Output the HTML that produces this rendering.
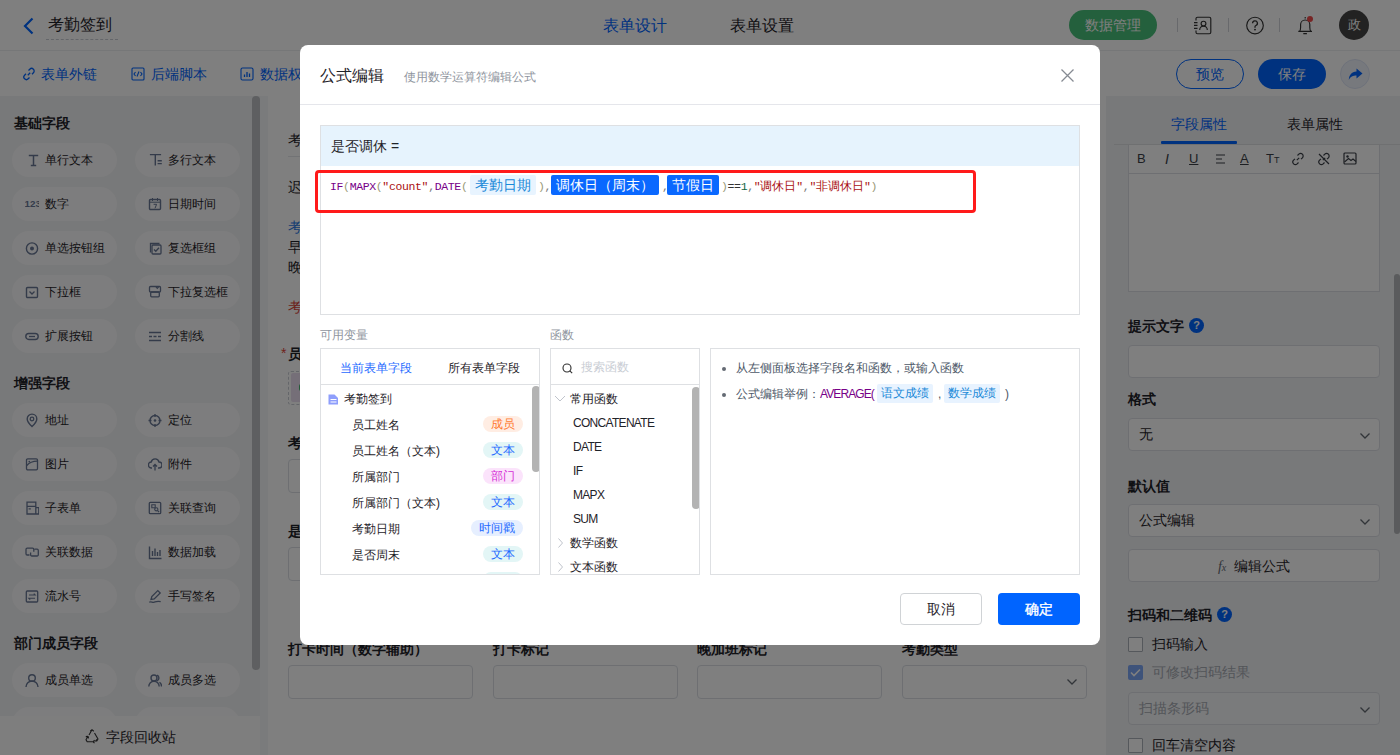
<!DOCTYPE html>
<html><head><meta charset="utf-8">
<style>
*{box-sizing:border-box;margin:0;padding:0}
html,body{width:1400px;height:755px;overflow:hidden;background:#fff;font-family:"Liberation Sans",sans-serif;color:#1f2329}
.a{position:absolute}
#hdr{left:0;top:0;width:1400px;height:51px;background:#fff;border-bottom:1px solid #eceef0}
#tb{left:0;top:51px;width:1400px;height:45px;background:#fff}
#lp{left:0;top:96px;width:268px;height:659px;background:#f1f2f4}
#lsb{left:260px;top:96px;width:8px;height:659px;background:#f5f6f8}
#thumb{left:252px;top:96px;width:8px;height:574px;border-radius:4px;background:#bcbec2}
#lfoot{left:0;top:716px;width:260px;height:39px;background:#fcfcfd;font-size:14px;color:#1f2329}
.sec{font-size:14px;font-weight:bold;color:#1f2329}
.pill{width:105px;height:34px;border-radius:17px;background:#fbfbfc;font-size:12px;color:#1f2329;line-height:34px;padding-left:33px}
.pill svg{position:absolute;left:12.5px;top:10px}
#cv{left:268px;top:96px;width:838px;height:659px;background:#fff}
#rp{left:1106px;top:96px;width:294px;height:659px;background:#f1f2f5}
.lbl{font-size:14px;font-weight:bold;color:#1f2329}
.inp{border:1px solid #dcdfe5;border-radius:4px;background:#fff}
#mask{left:0;top:0;width:1400px;height:755px;background:rgba(0,0,0,.5)}

#modal{left:300px;top:45px;width:800px;height:600px;background:#fff;border-radius:8px;overflow:hidden}
.m{position:absolute}
.mono{font-family:"Liberation Mono",monospace;font-size:11.5px;letter-spacing:-0.36px;white-space:pre;line-height:20px}
.cj{letter-spacing:0;font-size:12px}.kw{color:#770088}.br{color:#999977}.st{color:#aa1111}.nm{color:#116644}.op{color:#333}.cm{color:#777}
.vt{position:absolute;height:20px;line-height:20px;font-size:14px;padding:0 5px;border-radius:2px;white-space:nowrap}
.vrow{position:absolute;left:31px;font-size:12px;line-height:16px;color:#1f2329;white-space:nowrap}
.tag{position:absolute;right:16px;height:16px;line-height:16px;font-size:12px;padding:0 8px;border-radius:8px}
.lat{letter-spacing:-0.7px}.frow{position:absolute;font-size:12px;line-height:16px;color:#1f2329;white-space:nowrap}
</style></head><body>
<!-- header -->
<div id="hdr" class="a"></div>
<div class="a" style="left:22px;top:17px"><svg width="14" height="18" viewBox="0 0 14 18"><path d="M10.5 1.5 L3 9 L10.5 16.5" fill="none" stroke="#0064ff" stroke-width="2.2"/></svg></div>
<div class="a" style="left:48px;top:14px;font-size:16px;color:#1f2329;line-height:22px">考勤签到</div>
<div class="a" style="left:46px;top:39px;width:72px;border-top:1px dashed #c9cdd4"></div>
<div class="a" style="left:603px;top:15px;font-size:16px;color:#0064ff;line-height:22px">表单设计</div>
<div class="a" style="left:730px;top:15px;font-size:16px;color:#1f2329;line-height:22px">表单设置</div>
<div class="a" style="left:1069px;top:10px;width:88px;height:30px;border-radius:15px;background:#48c07a;color:#fff;font-size:14px;line-height:30px;text-align:center">数据管理</div>
<div class="a" style="left:1177px;top:18px;width:1px;height:14px;background:#d0d3d8"></div>
<div class="a" style="left:1228px;top:18px;width:1px;height:14px;background:#d0d3d8"></div>
<div class="a" style="left:1279px;top:18px;width:1px;height:14px;background:#d0d3d8"></div>
<svg class="a" style="left:1193px;top:16px" width="19" height="19" viewBox="0 0 19 19"><path d="M3 4.5V2.7a1.5 1.5 0 0 1 1.5-1.5H16.3a1.5 1.5 0 0 1 1.5 1.5V16.2a1.5 1.5 0 0 1-1.5 1.5H4.5a1.5 1.5 0 0 1-1.5-1.5V14.5M1 6.6h3.5M1 9.4h3.5M1 12.4h3.5" stroke="#333" stroke-width="1.15" fill="none"/><circle cx="10.5" cy="7.6" r="2.4" stroke="#333" stroke-width="1.15" fill="none"/><path d="M6.7 13.9a3.8 3.8 0 0 1 7.6 0" stroke="#333" stroke-width="1.15" fill="none"/></svg>
<svg class="a" style="left:1245px;top:16px" width="20" height="20" viewBox="0 0 20 20"><circle cx="10" cy="9.5" r="8.3" stroke="#333" stroke-width="1.15" fill="none"/><path d="M7.6 7.3a2.4 2.4 0 1 1 3.3 2.2c-.6.3-.9.7-.9 1.3v.9" stroke="#333" stroke-width="1.3" fill="none"/><circle cx="10" cy="13.6" r="0.95" fill="#333"/></svg>
<svg class="a" style="left:1296px;top:15px" width="20" height="21" viewBox="0 0 20 21"><path d="M2.3 16.4H16M3.4 16.4c.9-.9 1.2-2.2 1.2-4V9.6a4.6 4.6 0 0 1 9.2 0v2.8c0 1.8.3 3.1 1.2 4M9.2 2v1.4M7.3 18.6h3.6" stroke="#333" stroke-width="1.15" fill="none"/><circle cx="14" cy="4" r="3" fill="#ee4a4a"/></svg>
<div class="a" style="left:1339px;top:10px;width:30px;height:30px;border-radius:15px;background:#444;color:#fff;font-size:13px;line-height:30px;text-align:center;font-family:'Liberation Serif',serif">政</div>

<!-- toolbar -->
<div id="tb" class="a"></div>
<svg class="a" style="left:22px;top:67px" width="14" height="14" viewBox="0 0 14 14"><path d="M5.8 8.2l2.4-2.4M6.5 3.5l1.3-1.3a2.5 2.5 0 0 1 3.6 3.6L10 7.2M7.5 10.5l-1.3 1.3a2.5 2.5 0 0 1-3.6-3.6L4 6.8" stroke="#0064ff" stroke-width="1.3" fill="none"/></svg>
<svg class="a" style="left:131px;top:67px" width="14" height="14" viewBox="0 0 14 14"><rect x="1" y="1" width="12" height="12" rx="1" stroke="#0064ff" stroke-width="1.1" fill="none"/><path d="M4.5 5L3 7l1.5 2M9.5 5L11 7l-1.5 2M8 4.5L6 9.5" stroke="#0064ff" stroke-width="1.1" fill="none"/></svg>
<svg class="a" style="left:240px;top:67px" width="14" height="14" viewBox="0 0 14 14"><rect x="1" y="1" width="12" height="12" rx="1.5" stroke="#0064ff" stroke-width="1.1" fill="none"/><path d="M4.5 10V7.5M7 10V5M9.5 10V6.5" stroke="#0064ff" stroke-width="1.3" fill="none"/></svg>
<div class="a" style="left:41px;top:64px;font-size:14px;color:#0064ff;line-height:20px">表单外链</div>
<div class="a" style="left:151px;top:64px;font-size:14px;color:#0064ff;line-height:20px">后端脚本</div>
<div class="a" style="left:260px;top:64px;font-size:14px;color:#0064ff;line-height:20px">数据权限</div>
<div class="a" style="left:1176px;top:59px;width:68px;height:30px;border-radius:15px;border:1px solid #0064ff;color:#0064ff;font-size:14px;line-height:28px;text-align:center">预览</div>
<div class="a" style="left:1258px;top:59px;width:68px;height:30px;border-radius:15px;background:#0064ff;color:#fff;font-size:14px;line-height:30px;text-align:center">保存</div>
<div class="a" style="left:1340px;top:59px;width:30px;height:30px;border-radius:15px;background:#eef2fb;border:1px solid #dde4f5"><svg class="a" style="left:7px;top:8px" width="15" height="13" viewBox="0 0 15 13"><path d="M8.5 0.5L14.5 5.5L8.5 10.5V7.5C5 7.5 2.5 8.5 0.8 12C1.2 7 3.5 3.8 8.5 3.5z" fill="#0064ff"/></svg></div>

<!-- left panel -->
<div id="lp" class="a"></div>
<div class="a sec" style="left:14px;top:113px;line-height:20px">基础字段</div>
<div class="a pill" style="left:12px;top:143px"><svg width="14" height="15" viewBox="0 0 14 15"><path d="M3.8 2.6h9.4M8.5 2.6v10M5.8 12.5h5.4" stroke="#687795" stroke-width="1.5" fill="none"/></svg>单行文本</div>
<div class="a pill" style="left:135px;top:143px"><svg width="14" height="15" viewBox="0 0 14 15"><path d="M1.9 1.6h11.2M7.3 1.6v11M9.6 7.8h4.2M9.6 10.6h4.2" stroke="#687795" stroke-width="1.4" fill="none"/></svg>多行文本</div>
<div class="a pill" style="left:12px;top:187px"><svg width="14" height="15" viewBox="0 0 14 15"><text x="-0.5" y="10" font-size="9.8" font-weight="bold" fill="#687795" font-family="Liberation Sans">123</text></svg>数字</div>
<div class="a pill" style="left:135px;top:187px"><svg width="14" height="15" viewBox="0 0 14 15"><rect x="1.5" y="2.5" width="11" height="10" rx="1" stroke="#687795" stroke-width="1.4" fill="none"/><path d="M1.5 5.2h11M4.5 1v3M9.5 1v3M5.6 7.3h3l-1.6 4" stroke="#687795" stroke-width="1" fill="none"/></svg>日期时间</div>
<div class="a pill" style="left:12px;top:231px"><svg width="14" height="15" viewBox="0 0 14 15"><circle cx="7" cy="7.5" r="5.6" stroke="#687795" stroke-width="1.4" fill="none"/><circle cx="7" cy="7.5" r="2" fill="#687795"/></svg>单选按钮组</div>
<div class="a pill" style="left:135px;top:231px"><svg width="14" height="15" viewBox="0 0 14 15"><path d="M2.5 11.5V2.5h9" stroke="#687795" stroke-width="1.3" fill="none"/><rect x="4" y="4" width="9" height="9" rx="1" stroke="#687795" stroke-width="1.3" fill="none"/><path d="M6 8.5l1.8 1.8 3.2-3.6" stroke="#687795" stroke-width="1.3" fill="none"/></svg>复选框组</div>
<div class="a pill" style="left:12px;top:275px"><svg width="14" height="15" viewBox="0 0 14 15"><rect x="1.5" y="2.5" width="11" height="10" rx="1" stroke="#687795" stroke-width="1.4" fill="none"/><path d="M4.5 6.5l2.5 2.5 2.5-2.5" stroke="#687795" stroke-width="1.3" fill="none"/></svg>下拉框</div>
<div class="a pill" style="left:135px;top:275px"><svg width="14" height="15" viewBox="0 0 14 15"><rect x="1.5" y="1.5" width="11" height="5.5" rx="1" stroke="#687795" stroke-width="1.3" fill="none"/><rect x="2.7" y="7" width="8.6" height="4.8" rx="1" stroke="#687795" stroke-width="1.3" fill="none"/><path d="M8 1.8l1.3 1.6 1.3-1.6" stroke="#687795" stroke-width="1.2" fill="none"/></svg>下拉复选框</div>
<div class="a pill" style="left:12px;top:319px"><svg width="14" height="15" viewBox="0 0 14 15"><rect x="0.8" y="4.5" width="12.4" height="6" rx="3" stroke="#687795" stroke-width="1.4" fill="none"/><path d="M4 7.5h6" stroke="#687795" stroke-width="1.3"/></svg>扩展按钮</div>
<div class="a pill" style="left:135px;top:319px"><svg width="14" height="15" viewBox="0 0 14 15"><path d="M1 3.5h12M1 7.5h3M5.5 7.5h3M10 7.5h3M1 11.5h12" stroke="#687795" stroke-width="1.3" fill="none"/></svg>分割线</div>
<div class="a sec" style="left:14px;top:373px;line-height:20px">增强字段</div>
<div class="a pill" style="left:12px;top:403px"><svg width="14" height="15" viewBox="0 0 14 15"><path d="M7 13.5s-4.8-4.6-4.8-7.6a4.8 4.8 0 0 1 9.6 0c0 3-4.8 7.6-4.8 7.6z" stroke="#687795" stroke-width="1.4" fill="none"/><circle cx="7" cy="6" r="1.8" stroke="#687795" stroke-width="1.3" fill="none"/></svg>地址</div>
<div class="a pill" style="left:135px;top:403px"><svg width="14" height="15" viewBox="0 0 14 15"><circle cx="7" cy="7.5" r="5" stroke="#687795" stroke-width="1.4" fill="none"/><circle cx="7" cy="7.5" r="1.3" fill="#687795"/><path d="M7 1v3M7 11v3M0.5 7.5h3M10.5 7.5h3" stroke="#687795" stroke-width="1.3"/></svg>定位</div>
<div class="a pill" style="left:12px;top:447px"><svg width="14" height="15" viewBox="0 0 14 15"><rect x="1.5" y="1.8" width="11" height="11" rx="1.2" stroke="#687795" stroke-width="1.3" fill="none"/><path d="M1.8 8.5C4 6 6 4.2 12.2 4.2" stroke="#687795" stroke-width="1.2" fill="none"/><circle cx="4.3" cy="4.6" r="0.9" fill="#687795"/></svg>图片</div>
<div class="a pill" style="left:135px;top:447px"><svg width="14" height="15" viewBox="0 0 14 15"><path d="M4 11H3.5a3 3 0 0 1-.3-6A4 4 0 0 1 11 5a3 3 0 0 1 0 6h-1" stroke="#687795" stroke-width="1.4" fill="none"/><path d="M7 13.5V7.5M5 9.5l2-2 2 2" stroke="#687795" stroke-width="1.3" fill="none"/></svg>附件</div>
<div class="a pill" style="left:12px;top:491px"><svg width="14" height="15" viewBox="0 0 14 15"><path d="M2 1.2h8.8v11.8H2zM2 5.3h8.8M10.8 6.6h3v6.4h-3M3.6 7.8h2.2" stroke="#687795" stroke-width="1.3" fill="none"/></svg>子表单</div>
<div class="a pill" style="left:135px;top:491px"><svg width="14" height="15" viewBox="0 0 14 15"><rect x="1.3" y="1.3" width="11.4" height="11.4" rx="1" stroke="#687795" stroke-width="1.3" fill="none"/><path d="M3.8 3.8h3.4v3H3.8z" stroke="#687795" stroke-width="1.1" fill="none"/><circle cx="8.3" cy="8.3" r="1.6" stroke="#687795" stroke-width="1.1" fill="none"/><path d="M9.5 9.5l1.6 1.6" stroke="#687795" stroke-width="1.2"/></svg>关联查询</div>
<div class="a pill" style="left:12px;top:535px"><svg width="14" height="15" viewBox="0 0 14 15"><path d="M4.5 10H2.2a1.2 1.2 0 0 1-1.2-1.2V4.4a1.2 1.2 0 0 1 1.2-1.2H7.6a1.2 1.2 0 0 1 1.2 1.2v2.4M9.5 4.2h2.6a1.2 1.2 0 0 1 1.2 1.2v4.4a1.2 1.2 0 0 1-1.2 1.2H6.8a1.2 1.2 0 0 1-1.2-1.2V7.4" stroke="#687795" stroke-width="1.3" fill="none"/></svg>关联数据</div>
<div class="a pill" style="left:135px;top:535px"><svg width="14" height="15" viewBox="0 0 14 15"><path d="M1.5 1.5v12h12M4.5 11V6M7 11V3.5M9.5 11V7M12 11V5" stroke="#687795" stroke-width="1.4" fill="none"/></svg>数据加载</div>
<div class="a pill" style="left:12px;top:579px"><svg width="14" height="15" viewBox="0 0 14 15"><rect x="1.3" y="2" width="11.4" height="11" rx="1" stroke="#687795" stroke-width="1.3" fill="none"/><path d="M4 6h6.2L8.8 4.6M10 9.2H3.8l1.4 1.4" stroke="#687795" stroke-width="1.1" fill="none"/></svg>流水号</div>
<div class="a pill" style="left:135px;top:579px"><svg width="14" height="15" viewBox="0 0 14 15"><path d="M3 10.5l.8-3L9.8 1.6l2.4 2.4-6 5.9zM1.2 13.2c2-1.2 3.2.6 5 0s2.5-1.2 6.5-.6" stroke="#687795" stroke-width="1.3" fill="none"/></svg>手写签名</div>
<div class="a sec" style="left:14px;top:633px;line-height:20px">部门成员字段</div>
<div class="a pill" style="left:12px;top:663px"><svg width="14" height="15" viewBox="0 0 14 15"><circle cx="7" cy="5" r="3.3" stroke="#687795" stroke-width="1.4" fill="none"/><path d="M1 14a6 6 0 0 1 12 0" stroke="#687795" stroke-width="1.4" fill="none"/></svg>成员单选</div>
<div class="a pill" style="left:135px;top:663px"><svg width="14" height="15" viewBox="0 0 14 15"><circle cx="6" cy="5" r="3" stroke="#687795" stroke-width="1.4" fill="none"/><path d="M0.8 13.5a5.2 5.2 0 0 1 10.4 0M9 2.2a3 3 0 0 1 0 5.6M11.5 9.2a5 5 0 0 1 2 4.3" stroke="#687795" stroke-width="1.4" fill="none"/></svg>成员多选</div>
<div class="a pill" style="left:12px;top:707px"><svg width="14" height="15" viewBox="0 0 14 15"><circle cx="7" cy="5" r="3.3" stroke="#687795" stroke-width="1.4" fill="none"/></svg>部门单选</div>
<div class="a pill" style="left:135px;top:707px"><svg width="14" height="15" viewBox="0 0 14 15"><circle cx="7" cy="5" r="3.3" stroke="#687795" stroke-width="1.4" fill="none"/></svg>部门多选</div>
<div id="lsb" class="a"></div>
<div id="thumb" class="a"></div>
<div id="lfoot" class="a"><svg class="a" style="left:84px;top:13px" width="16" height="15" viewBox="0 0 16 15"><path d="M6.2 2.2L8 0.8l1.8 1.4M8 0.8L5 6M10.5 4l3.5 6-1.2 2H10.5M13 10.2l-1.2 1.8M9.5 12.8H3.2L2 10.8 4 7.2M4 7.2l-2.2.4M4 7.2l.6 2.1M10.5 11.2L9.2 12.8l1.3 1.4" stroke="#333" stroke-width="1.1" fill="none" stroke-linejoin="round"/></svg><div class="a" style="left:106px;top:10.5px;line-height:20px">字段回收站</div></div>

<!-- canvas -->
<div id="cv" class="a"></div>
<div class="a" style="left:288px;top:130px;font-size:14px;line-height:20px;color:#1f2329">考勤签到表单</div>
<div class="a" style="left:288px;top:156px;width:800px;height:1px;background:#e5e6eb"></div>
<div class="a" style="left:288px;top:177px;font-size:14px;line-height:20px;color:#1f2329">迟到早退说明</div>
<div class="a" style="left:288px;top:217px;font-size:14px;line-height:20px;color:#2d7be5">考勤规则说明</div>
<div class="a" style="left:288px;top:237px;font-size:14px;line-height:20px;color:#1f2329">早上打卡时间</div>
<div class="a" style="left:288px;top:257px;font-size:14px;line-height:20px;color:#1f2329">晚上打卡时间</div>
<div class="a" style="left:288px;top:297px;font-size:14px;line-height:20px;color:#d9463a">考勤异常提示</div>
<div class="a" style="left:281px;top:343px;font-size:14px;line-height:20px;color:#e0463a">*</div>
<div class="a" style="left:288px;top:344px;font-size:14px;line-height:20px;font-weight:bold;color:#1f2329">员工姓名</div>
<div class="a" style="left:288px;top:371px;width:200px;height:34px;border:1px dashed #c9cdd4;border-radius:3px"></div>
<div class="a" style="left:291px;top:373px;width:120px;height:29px;background:#eadff0;border-radius:2px"></div>
<div class="a" style="left:299px;top:384px;width:6px;height:7px;background:#46b46e;border-radius:2px"></div>
<div class="a" style="left:288px;top:433px;font-size:14px;line-height:20px;font-weight:bold;color:#1f2329">考勤日期</div>
<div class="a inp" style="left:288px;top:459px;width:400px;height:34px"></div>
<div class="a" style="left:288px;top:521px;font-size:14px;line-height:20px;font-weight:bold;color:#1f2329">是否周末</div>
<div class="a inp" style="left:288px;top:547px;width:400px;height:34px"></div>
<div class="a lbl" style="left:288px;top:639px;line-height:20px">打卡时间（数字辅助）</div>
<div class="a lbl" style="left:493px;top:639px;line-height:20px">打卡标记</div>
<div class="a lbl" style="left:697px;top:639px;line-height:20px">晚加班标记</div>
<div class="a lbl" style="left:902px;top:639px;line-height:20px">考勤类型</div>
<div class="a inp" style="left:288px;top:665px;width:185px;height:34px"></div>
<div class="a inp" style="left:493px;top:665px;width:185px;height:34px"></div>
<div class="a inp" style="left:697px;top:665px;width:185px;height:34px"></div>
<div class="a inp" style="left:902px;top:665px;width:185px;height:34px"><svg class="a" style="left:163px;top:12px" width="12" height="8" viewBox="0 0 12 8"><path d="M1.5 1.5L6 6l4.5-4.5" stroke="#646a73" stroke-width="1.3" fill="none"/></svg></div>

<!-- right panel -->
<div id="rp" class="a"></div>
<div class="a" style="left:1171px;top:114px;font-size:14px;line-height:20px;color:#0064ff">字段属性</div>
<div class="a" style="left:1287px;top:114px;font-size:14px;line-height:20px;color:#1f2329">表单属性</div>
<div class="a" style="left:1114px;top:144px;width:286px;height:1px;background:#dee0e3"></div>
<div class="a" style="left:1161px;top:141px;width:76px;height:3px;background:#0064ff;border-radius:1px"></div>
<div class="a" style="left:1128px;top:145px;width:252px;height:147px;border:1px solid #dcdfe5;border-top:none;background:#fff"></div>
<div class="a" style="left:1128px;top:173px;width:252px;height:1px;background:#dcdfe5"></div>
<div class="a" style="left:1137px;top:150px;font-size:13px;line-height:18px;color:#3a3f47;font-weight:normal">B</div>
<div class="a" style="left:1165px;top:150px;font-size:14px;line-height:18px;color:#3a3f47;font-style:italic;font-weight:normal">I</div>
<div class="a" style="left:1189px;top:150px;font-size:13px;line-height:18px;color:#3a3f47;text-decoration:underline">U</div>
<svg class="a" style="left:1215px;top:153px" width="12" height="12" viewBox="0 0 12 12"><path d="M1 2h9M1 6h6M1 10h9" stroke="#3a3f47" stroke-width="1.1"/></svg>
<div class="a" style="left:1240px;top:150px;font-size:13px;line-height:18px;color:#3a3f47;text-decoration:underline">A</div>
<div class="a" style="left:1266px;top:150px;font-size:13px;line-height:18px;color:#3a3f47;font-weight:normal">T<span style="font-size:9px">T</span></div>
<svg class="a" style="left:1291px;top:152px" width="14" height="14" viewBox="0 0 14 14"><path d="M5.8 8.2l2.4-2.4M6.5 3.5l1.3-1.3a2.5 2.5 0 0 1 3.6 3.6L10 7.2M7.5 10.5l-1.3 1.3a2.5 2.5 0 0 1-3.6-3.6L4 6.8" stroke="#3a3f47" stroke-width="1.2" fill="none"/></svg>
<svg class="a" style="left:1317px;top:152px" width="14" height="14" viewBox="0 0 14 14"><path d="M5.8 8.2l2.4-2.4M6.5 3.5l1.3-1.3a2.5 2.5 0 0 1 3.6 3.6L10 7.2M7.5 10.5l-1.3 1.3a2.5 2.5 0 0 1-3.6-3.6L4 6.8M2 2l10 10" stroke="#3a3f47" stroke-width="1.2" fill="none"/></svg>
<svg class="a" style="left:1343px;top:152px" width="14" height="13" viewBox="0 0 14 13"><rect x="1" y="1" width="12" height="11" rx="1" stroke="#3a3f47" stroke-width="1.2" fill="none"/><circle cx="4.5" cy="4.5" r="1.2" fill="#3a3f47"/><path d="M1.5 10l4-3.5 2.5 2 2-1.5 3 2.5" stroke="#3a3f47" stroke-width="1.1" fill="none"/></svg>
<div class="a lbl" style="left:1128px;top:316px;line-height:20px">提示文字</div>
<div class="a" style="left:1189px;top:318px;width:15px;height:15px;border-radius:8px;background:#0064ff;color:#fff;font-size:11px;font-weight:bold;line-height:15px;text-align:center">?</div>
<div class="a inp" style="left:1128px;top:345px;width:252px;height:33px"></div>
<div class="a lbl" style="left:1128px;top:389px;line-height:20px">格式</div>
<div class="a inp" style="left:1128px;top:418px;width:252px;height:33px;font-size:14px;line-height:31px;padding-left:10px">无<svg class="a" style="left:230px;top:13px" width="12" height="8" viewBox="0 0 12 8"><path d="M1.5 1.5L6 6l4.5-4.5" stroke="#646a73" stroke-width="1.3" fill="none"/></svg></div>
<div class="a lbl" style="left:1128px;top:476px;line-height:20px">默认值</div>
<div class="a inp" style="left:1128px;top:504px;width:252px;height:33px;font-size:14px;line-height:31px;padding-left:10px">公式编辑<svg class="a" style="left:230px;top:13px" width="12" height="8" viewBox="0 0 12 8"><path d="M1.5 1.5L6 6l4.5-4.5" stroke="#646a73" stroke-width="1.3" fill="none"/></svg></div>
<div class="a inp" style="left:1128px;top:549px;width:252px;height:33px;font-size:14px;line-height:32px;text-align:center"><span style="font-family:'Liberation Serif',serif;font-style:italic;color:#646a73">f<span style="font-size:10px">x</span></span>&nbsp; 编辑公式</div>
<div class="a lbl" style="left:1128px;top:605px;line-height:20px">扫码和二维码</div>
<div class="a" style="left:1217px;top:607px;width:15px;height:15px;border-radius:8px;background:#0064ff;color:#fff;font-size:11px;font-weight:bold;line-height:15px;text-align:center">?</div>
<div class="a" style="left:1128px;top:637px;width:15px;height:15px;border:1px solid #aab0b8;border-radius:1px;background:#fff"></div>
<div class="a" style="left:1152px;top:634px;font-size:14px;line-height:20px;color:#1f2329">扫码输入</div>
<div class="a" style="left:1128px;top:665px;width:15px;height:15px;border-radius:2px;background:#7da6f5"><svg class="a" style="left:2px;top:3px" width="11" height="9" viewBox="0 0 11 9"><path d="M1 4.5l3 3 6-6" stroke="#fff" stroke-width="1.6" fill="none"/></svg></div>
<div class="a" style="left:1152px;top:662px;font-size:14px;line-height:20px;color:#a6abb3">可修改扫码结果</div>
<div class="a inp" style="left:1128px;top:692px;width:252px;height:33px;font-size:14px;line-height:31px;padding-left:10px;background:#f5f6f8;color:#a6abb3">扫描条形码<svg class="a" style="left:230px;top:13px" width="12" height="8" viewBox="0 0 12 8"><path d="M1.5 1.5L6 6l4.5-4.5" stroke="#646a73" stroke-width="1.3" fill="none"/></svg></div>
<div class="a" style="left:1128px;top:738px;width:15px;height:15px;border:1px solid #aab0b8;border-radius:1px;background:#fff"></div>
<div class="a" style="left:1152px;top:735px;font-size:14px;line-height:20px;color:#1f2329">回车清空内容</div>
<div class="a" style="left:1394px;top:274px;width:6px;height:260px;border-radius:3px;background:#b5b7ba"></div>

<div id="mask" class="a"></div>
<div id="modal" class="a">
 <div class="m" style="left:20px;top:20px;font-size:16px;line-height:22px;color:#1f2329">公式编辑</div>
 <div class="m" style="left:104px;top:23px;font-size:12px;line-height:18px;color:#8f959e">使用数学运算符编辑公式</div>
 <svg class="m" style="left:760px;top:23px" width="15" height="15" viewBox="0 0 15 15"><path d="M1.5 1.5l12 12M13.5 1.5l-12 12" stroke="#868b93" stroke-width="1.3"/></svg>
 <div class="m" style="left:0;top:59px;width:800px;height:1px;background:#e5e6eb"></div>
 <!-- formula box -->
 <div class="m" style="left:20px;top:80px;width:760px;height:190px;border:1px solid #dee0e3;background:#fff"></div>
 <div class="m" style="left:21px;top:81px;width:758px;height:40px;background:#e6f3fd"></div>
 <div class="m" style="left:31px;top:91px;font-size:14px;line-height:20px;color:#1f2329;white-space:pre">是否调休 =</div>
 <div class="m" style="left:15px;top:125px;width:661px;height:43px;border:3px solid #ff1a1a;border-radius:4px"></div>
 <div class="m mono" style="left:30px;top:132px"><span class="kw">IF</span><span class="br">(</span><span class="kw">MAPX</span><span class="br">(</span><span class="st">"count"</span><span class="cm">,</span><span class="kw">DATE</span><span class="br">(</span></div>
 <div class="vt" style="left:170px;top:130px;background:#e8f4ff;color:#1a89d8">考勤日期</div>
 <div class="m mono" style="left:238px;top:132px"><span class="br">)</span><span class="cm">,</span></div>
 <div class="vt" style="left:251px;top:130px;background:#0a68ff;color:#fff;width:108px">调休日（周末）</div>
 <div class="m mono" style="left:362px;top:132px"><span class="cm">,</span></div>
 <div class="vt" style="left:367px;top:130px;background:#0a68ff;color:#fff">节假日</div>
 <div class="m mono" style="left:421px;top:132px"><span class="br">)</span><span class="op">==</span><span class="nm">1</span><span class="cm">,</span><span class="st">"<span class="cj">调休日</span>"</span><span class="cm">,</span><span class="st">"<span class="cj">非调休日</span>"</span><span class="br">)</span></div>
 <!-- labels -->
 <div class="m" style="left:20px;top:282px;font-size:12px;line-height:16px;color:#8f959e">可用变量</div>
 <div class="m" style="left:250px;top:282px;font-size:12px;line-height:16px;color:#8f959e">函数</div>
 <!-- variables panel -->
 <div class="m" style="left:20px;top:303px;width:220px;height:227px;border:1px solid #dee0e3;overflow:hidden">
  <div class="m" style="left:19px;top:11px;font-size:12px;line-height:16px;color:#1f6bff">当前表单字段</div>
  <div class="m" style="left:127px;top:11px;font-size:12px;line-height:16px;color:#1f2329">所有表单字段</div>
  <div class="m" style="left:0;top:35px;width:220px;height:1px;background:#dee0e3"></div>
  <svg class="m" style="left:7px;top:45px" width="11" height="11" viewBox="0 0 11 11"><path d="M0.5 0.5h6l3.5 3.5v6.5h-9.5z" fill="#8e9efc"/><path d="M2.5 5.5h6M2.5 8h6" stroke="#fff" stroke-width="1"/></svg>
  <div class="vrow" style="left:23px;top:42px">考勤签到</div>
  <div class="vrow" style="top:68px">员工姓名</div><div class="tag" style="top:67px;background:#ffede3;color:#ff7a30">成员</div>
  <div class="vrow" style="top:94px">员工姓名（文本)</div><div class="tag" style="top:93px;background:#e3f6f6;color:#1f6bff">文本</div>
  <div class="vrow" style="top:120px">所属部门</div><div class="tag" style="top:119px;background:#fbe3fb;color:#d62fd6">部门</div>
  <div class="vrow" style="top:146px">所属部门（文本)</div><div class="tag" style="top:145px;background:#e3f6f6;color:#1f6bff">文本</div>
  <div class="vrow" style="top:172px">考勤日期</div><div class="tag" style="top:171px;background:#e6efff;color:#1f6bff;padding:0 8px">时间戳</div>
  <div class="vrow" style="top:198px">是否周末</div><div class="tag" style="top:197px;background:#e3f6f6;color:#1f6bff">文本</div>
  <div class="tag" style="top:223px;background:#e3f6f6;color:#1f6bff">文本</div>
  <div class="m" style="left:211px;top:37px;width:8px;height:86px;border-radius:4px;background:#b3b3b3"></div>
 </div>
 <!-- functions panel -->
 <div class="m" style="left:250px;top:303px;width:150px;height:227px;border:1px solid #dee0e3;overflow:hidden">
  <svg class="m" style="left:11px;top:14px" width="11" height="11" viewBox="0 0 11 11"><circle cx="5" cy="5" r="4" stroke="#333" stroke-width="1.15" fill="none"/><path d="M7.8 7.8l2.4 2.4" stroke="#333" stroke-width="1.15"/></svg>
  <div class="m" style="left:30px;top:10px;font-size:12px;line-height:16px;color:#c9cdd4">搜索函数</div>
  <div class="m" style="left:0;top:35px;width:150px;height:1px;background:#dee0e3"></div>
  <svg class="m" style="left:3px;top:46px" width="12" height="8" viewBox="0 0 12 8"><path d="M1 1l5 5 5-5" stroke="#c0c4cc" stroke-width="1" fill="none"/></svg>
  <div class="frow" style="left:19px;top:42px">常用函数</div>
  <div class="frow" style="left:22px;top:66px"><span class="lat">CONCATENATE</span></div>
  <div class="frow" style="left:22px;top:90px"><span class="lat">DATE</span></div>
  <div class="frow" style="left:22px;top:114px"><span class="lat">IF</span></div>
  <div class="frow" style="left:22px;top:138px"><span class="lat">MAPX</span></div>
  <div class="frow" style="left:22px;top:162px"><span class="lat">SUM</span></div>
  <svg class="m" style="left:6px;top:188px" width="8" height="12" viewBox="0 0 8 12"><path d="M1.5 1.5l4 4.5-4 4.5" stroke="#c0c4cc" stroke-width="1" fill="none"/></svg>
  <div class="frow" style="left:19px;top:186px">数学函数</div>
  <svg class="m" style="left:6px;top:212px" width="8" height="12" viewBox="0 0 8 12"><path d="M1.5 1.5l4 4.5-4 4.5" stroke="#c0c4cc" stroke-width="1" fill="none"/></svg>
  <div class="frow" style="left:19px;top:210px">文本函数</div>
  <div class="m" style="left:141px;top:38px;width:8px;height:122px;border-radius:4px;background:#b3b3b3"></div>
 </div>
 <!-- info panel -->
 <div class="m" style="left:410px;top:303px;width:370px;height:227px;border:1px solid #dee0e3">
  <div class="m" style="left:11px;top:18px;width:4px;height:4px;border-radius:2px;background:#646a73"></div>
  <div class="m" style="left:25px;top:11px;font-size:12px;line-height:16px;color:#4e5969;white-space:nowrap">从左侧面板选择字段名和函数，或输入函数</div>
  <div class="m" style="left:11px;top:44px;width:4px;height:4px;border-radius:2px;background:#646a73"></div>
  <div class="m" style="left:25px;top:37px;font-size:12px;line-height:16px;color:#4e5969;white-space:nowrap">公式编辑举例：<span style="color:#770088;letter-spacing:-0.9px">AVERAGE(</span></div>
  <div class="m" style="left:166px;top:35px;height:19px;line-height:19px;padding:0 4px;font-size:12px;background:#e8f3ff;color:#1a89d8;border-radius:2px">语文成绩</div>
  <div class="m" style="left:227px;top:37px;font-size:12px;line-height:16px;color:#4e5969">,</div>
  <div class="m" style="left:233px;top:35px;height:19px;line-height:19px;padding:0 4px;font-size:12px;background:#e8f3ff;color:#1a89d8;border-radius:2px">数学成绩</div>
  <div class="m" style="left:294px;top:37px;font-size:12px;line-height:16px;color:#4e5969">)</div>
 </div>
 <!-- buttons -->
 <div class="m" style="left:600px;top:548px;width:82px;height:32px;border:1px solid #d0d3d6;border-radius:4px;font-size:14px;line-height:30px;text-align:center;color:#1f2329">取消</div>
 <div class="m" style="left:698px;top:548px;width:82px;height:32px;border-radius:4px;background:#0064ff;font-size:14px;line-height:32px;text-align:center;color:#fff;-webkit-text-stroke:0.35px #fff">确定</div>
</div>
</body></html>
